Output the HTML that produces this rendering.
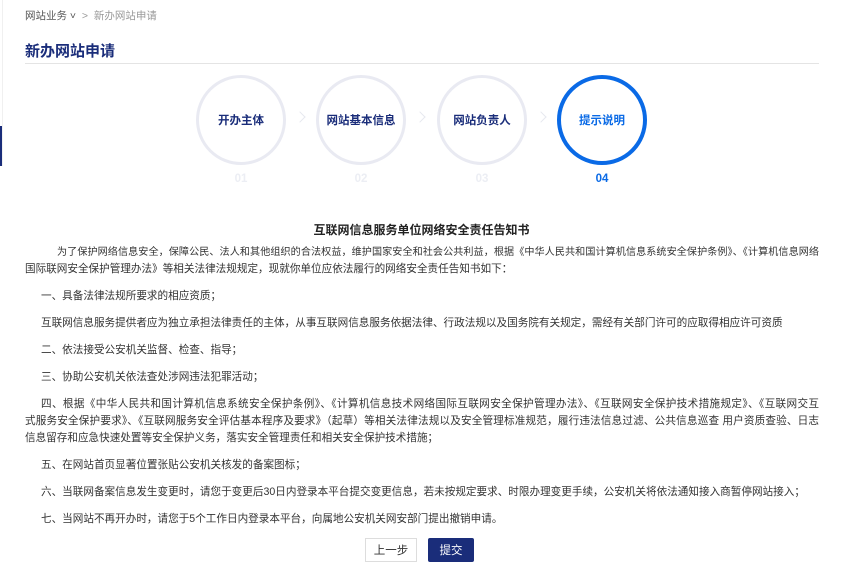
<!DOCTYPE html>
<html><head><meta charset="utf-8"><style>
*{margin:0;padding:0;box-sizing:border-box}
body{width:859px;height:578px;overflow:hidden;background:#fff;font-family:"Liberation Sans","Noto Sans CJK SC",sans-serif;color:#333;position:relative}
.side{position:absolute;left:0;top:126px;width:2px;height:40px;background:#1a2d7a}
.sidel{position:absolute;left:2px;top:0;width:1px;height:166px;background:#f0f0f0}
.bc{position:absolute;left:25px;top:8px;font-size:10.5px;color:#555}
.bc span{color:#999}
.title{position:absolute;left:25px;top:40px;font-size:15px;font-weight:bold;color:#1a2d7a}
.hr{position:absolute;left:25px;top:63px;width:794px;height:1px;background:#e4e4e4}
.c{position:absolute;top:75px;width:90px;height:90px;border:3px solid #e9eaf2;border-radius:50%;display:flex;align-items:center;justify-content:center;font-size:11.5px;font-weight:bold;color:#1a2d7a}
.c.a{border:4px solid #0a6ae6;color:#0a6ae6}
.n{position:absolute;top:173px;width:90px;text-align:center;font-size:11.5px;font-weight:bold;color:#eceef4}
.n.a{color:#0a6ae6}
.ar{position:absolute;top:113px;width:8px;height:8px;border-right:1px solid #e6e8ef;border-top:1px solid #e6e8ef;transform:rotate(45deg)}
.h{position:absolute;top:221px;left:0;width:843px;text-align:center;font-size:12px;font-weight:bold;color:#222}
.body{position:absolute;left:25px;top:244px;width:794px;font-size:10.6px;line-height:17px;color:#333;white-space:nowrap}
.body p{padding-left:16px;margin-bottom:10px}
.body p.f{padding-left:0}
.j{display:block;text-align:justify;text-align-last:justify}
.in{padding-left:32px}
.in16{padding-left:16px}
.btn{position:absolute;top:538px;height:24px;font-size:11.5px;display:flex;align-items:center;justify-content:center}
</style></head><body>
<div class="sidel"></div><div class="side"></div>
<div class="bc">网站业务 ˅ &nbsp;<span>&gt; &nbsp;新办网站申请</span></div>
<div class="title">新办网站申请</div>
<div class="hr"></div>
<div class="c" style="left:196px">开办主体</div>
<div class="c" style="left:316px">网站基本信息</div>
<div class="c" style="left:437px">网站负责人</div>
<div class="c a" style="left:557px">提示说明</div>
<div class="ar" style="left:296px"></div><div class="ar" style="left:416px"></div><div class="ar" style="left:537px"></div>
<div class="n" style="left:196px">01</div><div class="n" style="left:316px">02</div><div class="n" style="left:437px">03</div><div class="n a" style="left:557px">04</div>
<div class="h">互联网信息服务单位网络安全责任告知书</div>
<div class="body">
<p class="f"><span class="j in" style="font-size:10.1px">为了保护网络信息安全，保障公民、法人和其他组织的合法权益，维护国家安全和社会公共利益，根据《中华人民共和国计算机信息系统安全保护条例》、《计算机信息网络</span>国际联网安全保护管理办法》等相关法律法规规定，现就你单位应依法履行的网络安全责任告知书如下：</p>
<p>一、具备法律法规所要求的相应资质；</p>
<p>互联网信息服务提供者应为独立承担法律责任的主体，从事互联网信息服务依据法律、行政法规以及国务院有关规定，需经有关部门许可的应取得相应许可资质</p>
<p>二、依法接受公安机关监督、检查、指导；</p>
<p>三、协助公安机关依法查处涉网违法犯罪活动；</p>
<p class="f"><span class="j in16">四、根据《中华人民共和国计算机信息系统安全保护条例》、《计算机信息技术网络国际互联网安全保护管理办法》、《互联网安全保护技术措施规定》、《互联网交互</span><span class="j">式服务安全保护要求》、《互联网服务安全评估基本程序及要求》（起草）等相关法律法规以及安全管理标准规范，履行违法信息过滤、公共信息巡查 用户资质查验、日志</span>信息留存和应急快速处置等安全保护义务，落实安全管理责任和相关安全保护技术措施；</p>
<p>五、在网站首页显著位置张贴公安机关核发的备案图标；</p>
<p>六、当联网备案信息发生变更时，请您于变更后30日内登录本平台提交变更信息，若未按规定要求、时限办理变更手续，公安机关将依法通知接入商暂停网站接入；</p>
<p>七、当网站不再开办时，请您于5个工作日内登录本平台，向属地公安机关网安部门提出撤销申请。</p>
</div>
<div class="btn" style="left:365px;width:52px;border:1px solid #ddd;color:#333">上一步</div>
<div class="btn" style="left:428px;width:46px;background:#1a2d7a;color:#fff;border-radius:2px">提交</div>
</body></html>
